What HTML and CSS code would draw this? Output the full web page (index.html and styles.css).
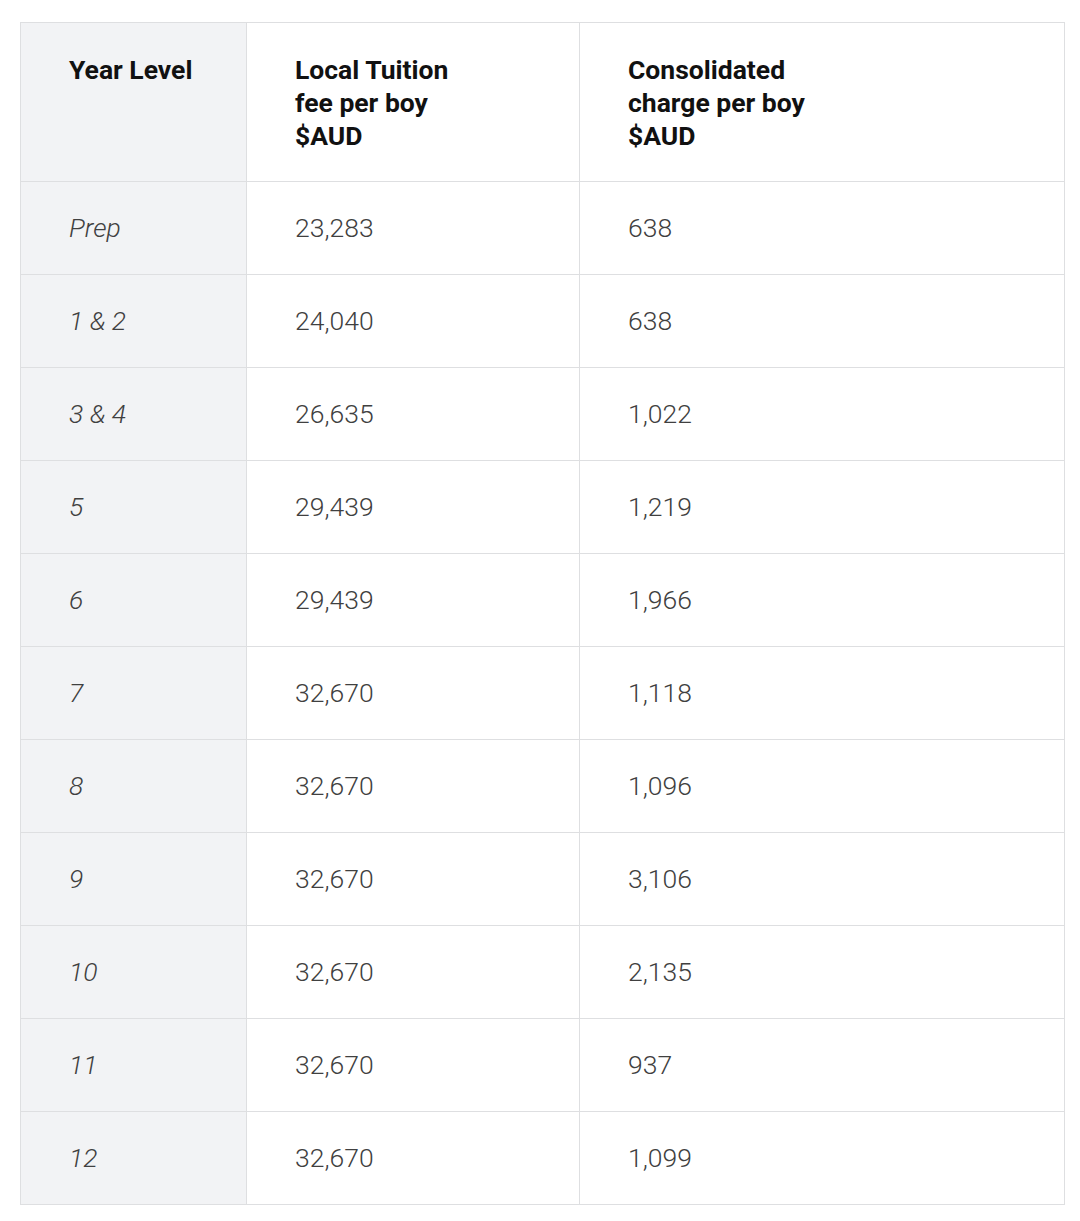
FILE: index.html
```html
<!DOCTYPE html>
<html>
<head>
<meta charset="utf-8">
<link rel="stylesheet" href="styles.css">
</head>
<body>
<div class="wrap">
<table class="fees">
  <colgroup>
    <col class="c1"><col class="c2"><col class="c3">
  </colgroup>
  <thead>
    <tr>
      <th class="lvl">Year Level</th>
      <th>Local Tuition<br>fee per boy<br>$AUD</th>
      <th>Consolidated<br>charge per boy<br>$AUD</th>
    </tr>
  </thead>
  <tbody>
    <tr><td class="lvl">Prep</td><td>23,283</td><td>638</td></tr>
    <tr><td class="lvl">1 &amp; 2</td><td>24,040</td><td>638</td></tr>
    <tr><td class="lvl">3 &amp; 4</td><td>26,635</td><td>1,022</td></tr>
    <tr><td class="lvl">5</td><td>29,439</td><td>1,219</td></tr>
    <tr><td class="lvl">6</td><td>29,439</td><td>1,966</td></tr>
    <tr><td class="lvl">7</td><td>32,670</td><td>1,118</td></tr>
    <tr><td class="lvl">8</td><td>32,670</td><td>1,096</td></tr>
    <tr><td class="lvl">9</td><td>32,670</td><td>3,106</td></tr>
    <tr><td class="lvl">10</td><td>32,670</td><td>2,135</td></tr>
    <tr><td class="lvl">11</td><td>32,670</td><td>937</td></tr>
    <tr><td class="lvl">12</td><td>32,670</td><td>1,099</td></tr>
  </tbody>
</table>
</div>
</body>
</html>
```
FILE: styles.css
```css
html, body {
  margin: 0;
  padding: 0;
  background: #ffffff;
}
.wrap {
  padding: 22px 16px 0 20px;
}
.fees {
  width: 1044px;
  border-collapse: collapse;
  table-layout: fixed;
  font-family: Roboto, "Liberation Sans", sans-serif;
  font-size: 26.5px;
}
.c1 { width: 226px; }
.c2 { width: 333px; }
.c3 { width: 485px; }
.fees th, .fees td {
  border: 1px solid #dedfe1;
  text-align: left;
  padding: 0 20px 0 48px;
}
.fees th {
  font-weight: 700;
  color: #111111;
  line-height: 33px;
  vertical-align: top;
  padding-top: 30px;
  padding-bottom: 29px;
}
.fees td {
  font-weight: 300;
  color: #404040;
  height: 92px;
  line-height: 30px;
  vertical-align: middle;
}
.fees .lvl {
  background: #f2f3f5;
}
.fees td.lvl {
  font-style: italic;
}
```
